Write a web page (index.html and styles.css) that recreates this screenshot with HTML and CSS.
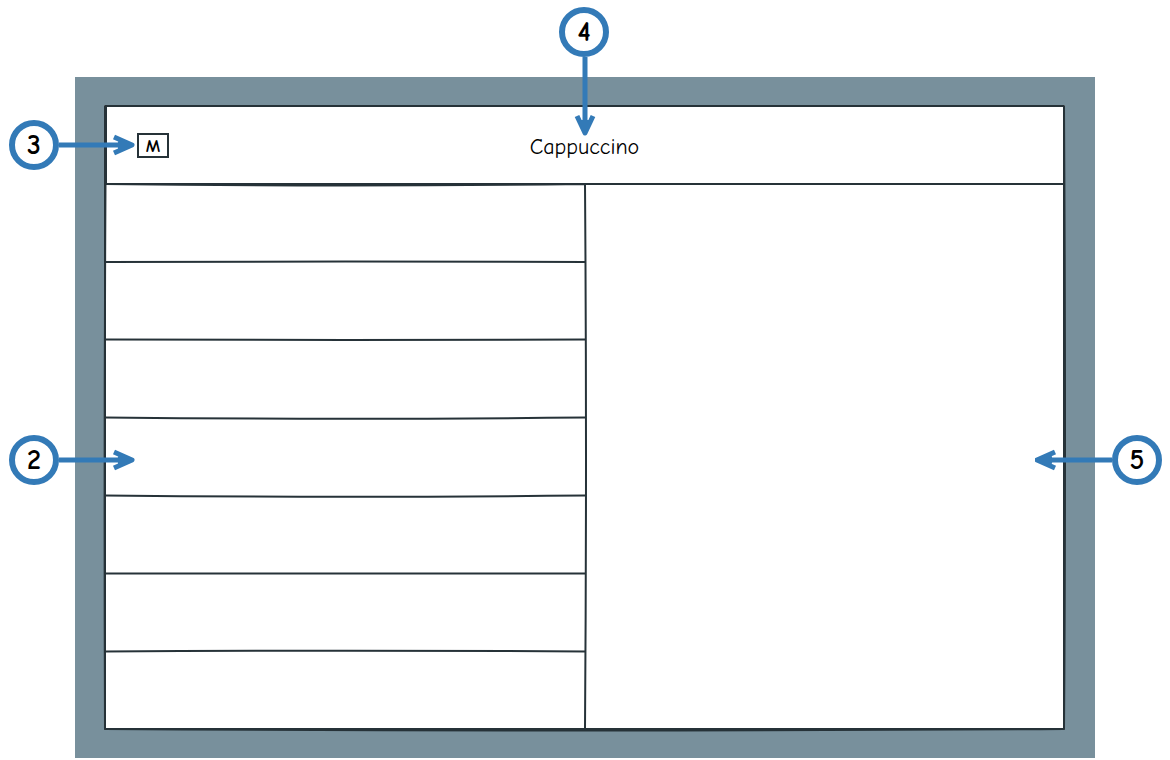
FILE: index.html
```html
<!DOCTYPE html>
<html lang="en">
<head>
<meta charset="utf-8">
<meta name="viewport" content="width=device-width, initial-scale=1">
<title>Cappuccino</title>
<link rel="stylesheet" href="styles.css">
</head>
<body>
<main class="page">
  <div class="frame">
    <div class="screen">
      <header class="toolbar">
        <button class="menu-button" type="button">M</button>
        <h1 class="title">Cappuccino</h1>
      </header>
      <div class="content">
        <ul class="list">
          <li class="row"><svg class="divider" viewBox="0 0 480 4" preserveAspectRatio="none"><path d="M0 2Q240 1 480 2"/></svg></li>
          <li class="row"><svg class="divider" viewBox="0 0 480 4" preserveAspectRatio="none"><path d="M0 1.5Q240 2.5 480 1.5"/></svg></li>
          <li class="row"><svg class="divider" viewBox="0 0 480 4" preserveAspectRatio="none"><path d="M0 1.5Q240 4 480 1.5"/></svg></li>
          <li class="row"><svg class="divider" viewBox="0 0 480 4" preserveAspectRatio="none"><path d="M0 1.5Q240 4 480 1.5"/></svg></li>
          <li class="row"><svg class="divider" viewBox="0 0 480 4" preserveAspectRatio="none"><path d="M0 1.4H480"/></svg></li>
          <li class="row"><svg class="divider" viewBox="0 0 480 4" preserveAspectRatio="none"><path d="M0 1.5Q240 0 480 1.5"/></svg></li>
          <li class="row"></li>
        </ul>
        <section class="detail" aria-label="Detail"></section>
      </div>
      <svg class="outline" viewBox="0 0 961 625" preserveAspectRatio="none" aria-hidden="true">
        <path d="M1 1H960V624H1Z"/>
        <path d="M2 1V79Q480 77 960 79"/>
        <path d="M1.5 79Q240 82 481 79Q483 350 481 624"/>
        <path d="M1.5 79Q0 350 1 624Q480 627 960 624Q962 350 960 1"/>
      </svg>
    </div>
  </div>

  <div class="callout callout-3">
    <span class="badge">3</span>
    <svg class="arrow" viewBox="0 0 77 24"><path d="M0 12H69M55 4L73 12L55 20M59 9L69 12L59 15"/></svg>
  </div>
  <div class="callout callout-2">
    <span class="badge">2</span>
    <svg class="arrow" viewBox="0 0 77 24"><path d="M0 12H69M55 4L73 12L55 20M59 9L69 12L59 15"/></svg>
  </div>
  <div class="callout callout-4">
    <span class="badge">4</span>
    <svg class="arrow arrow-down" viewBox="0 0 24 80"><path d="M13 0V73M5 59L13 76L21 59M10 63L13 73L16 63"/></svg>
  </div>
  <div class="callout callout-5">
    <svg class="arrow" viewBox="0 0 77 24"><path d="M77 12H7M20 4L2 12L20 20M17 9L7 12L17 15"/></svg>
    <span class="badge">5</span>
  </div>
</main>
</body>
</html>
```
FILE: styles.css
```css
* {
  box-sizing: border-box;
}

body {
  margin: 0;
  background: #fff;
  color: #000;
  font-family: "Comic Neue", "Comic Sans MS", Lato, sans-serif;
}

.page {
  position: relative;
  display: flex;
  min-height: 100vh;
  padding: 77px 75px 2px;
}

.frame {
  display: flex;
  flex: 1;
  padding: 28px 30px 28px 29px;
  background: #78909c;
}

.screen {
  position: relative;
  display: grid;
  flex: 1;
  grid-template-rows: 79px 1fr;
  background: #fff;
}

.toolbar {
  display: grid;
  grid-template-columns: 1fr auto 1fr;
  align-items: center;
  padding: 2px 33px 0;
}

.menu-button {
  width: 32px;
  height: 25px;
  padding: 2px 0 0;
  border: 2px solid #263238;
  background: #fff;
  color: #000;
  font-family: inherit;
  font-size: 18px;
  font-weight: 700;
  line-height: 18px;
}

.title {
  margin: 0;
  padding-top: 2px;
  font-size: 22px;
  font-weight: 400;
  line-height: 28px;
}

.content {
  display: grid;
  grid-template-columns: 1fr 1fr;
}

.list {
  display: grid;
  grid-auto-rows: 1fr;
  margin: 0;
  padding: 0;
  list-style: none;
}

.row {
  position: relative;
}

.divider {
  position: absolute;
  bottom: -2px;
  left: 1px;
  width: 100%;
  height: 4px;
}

.outline {
  position: absolute;
  inset: 0;
  width: 100%;
  height: 100%;
  pointer-events: none;
}

.divider,
.outline {
  overflow: visible;
  fill: none;
  stroke: #263238;
  stroke-width: 2px;
  stroke-linejoin: round;
}

.callout {
  position: absolute;
  display: flex;
  align-items: center;
}

.callout-2 {
  top: 435px;
  left: 9px;
}

.callout-3 {
  top: 120px;
  left: 9px;
}

.callout-4 {
  top: 7px;
  left: 50%;
  flex-direction: column;
  transform: translateX(-26px);
}

.callout-5 {
  top: 435px;
  right: 8px;
}

.badge {
  width: 50px;
  height: 50px;
  border: 6px solid #337ab7;
  border-radius: 50%;
  background: #fff;
  font-size: 28px;
  font-weight: 700;
  line-height: 38px;
  text-align: center;
}

.arrow {
  width: 77px;
  height: 24px;
  fill: none;
  stroke: #337ab7;
  stroke-width: 5px;
  stroke-linejoin: round;
}

.arrow-down {
  width: 24px;
  height: 80px;
}
```
